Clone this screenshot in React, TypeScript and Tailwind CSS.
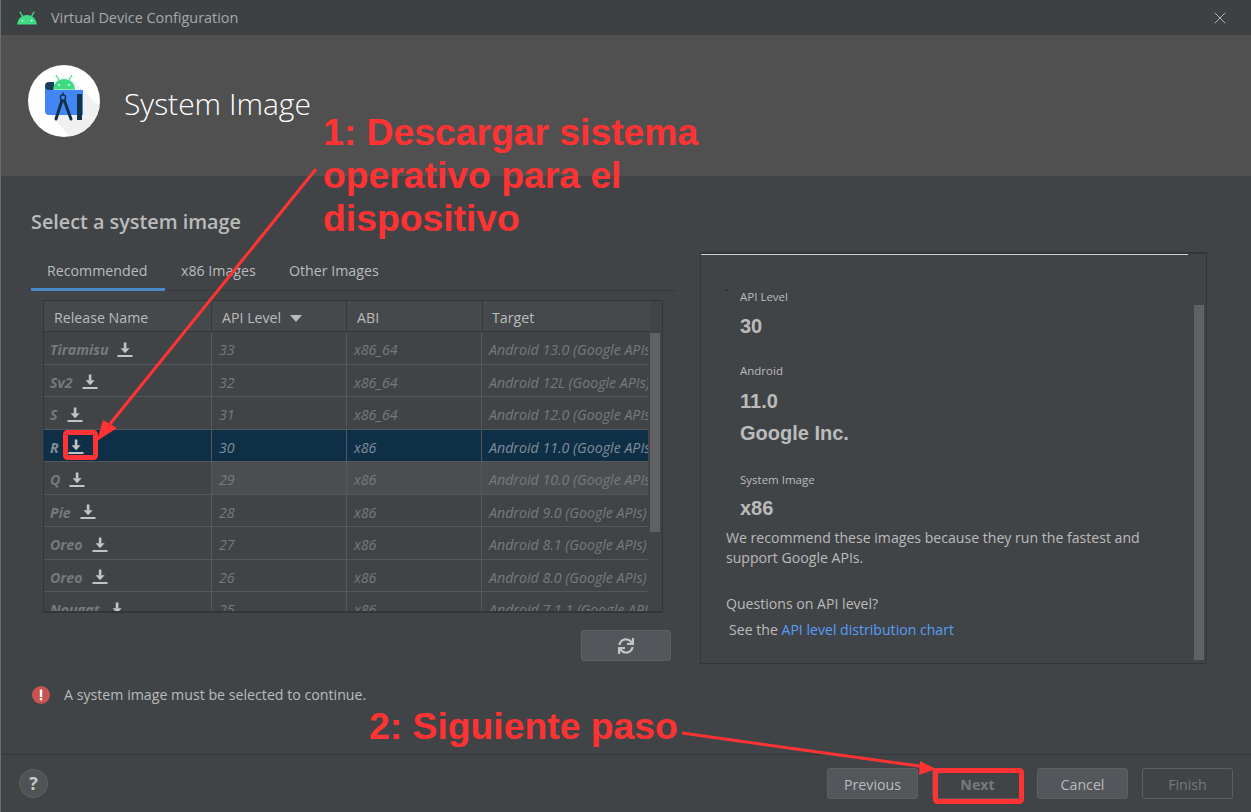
import React from 'react'
import { X } from 'lucide-react'
import { FaSync } from 'react-icons/fa'

const uiFont = { fontFamily: '"Open Sans", "Noto Sans", sans-serif' }
const arial = { fontFamily: '"Liberation Sans", sans-serif' }

type Row = { name: string; api: string; abi: string; target: string; selected?: boolean; hover?: boolean }

const rows: Row[] = [
  { name: 'Tiramisu', api: '33', abi: 'x86_64', target: 'Android 13.0 (Google APIs)' },
  { name: 'Sv2', api: '32', abi: 'x86_64', target: 'Android 12L (Google APIs)' },
  { name: 'S', api: '31', abi: 'x86_64', target: 'Android 12.0 (Google APIs)' },
  { name: 'R', api: '30', abi: 'x86', target: 'Android 11.0 (Google APIs)', selected: true },
  { name: 'Q', api: '29', abi: 'x86', target: 'Android 10.0 (Google APIs)', hover: true },
  { name: 'Pie', api: '28', abi: 'x86', target: 'Android 9.0 (Google APIs)' },
  { name: 'Oreo', api: '27', abi: 'x86', target: 'Android 8.1 (Google APIs)' },
  { name: 'Oreo', api: '26', abi: 'x86', target: 'Android 8.0 (Google APIs)' },
  { name: 'Nougat', api: '25', abi: 'x86', target: 'Android 7.1.1 (Google APIs)' },
]

const DownloadIcon = () => (
  <svg width="16" height="16" viewBox="0 0 16 16" className="shrink-0 text-[#c4c4c4]" fill="currentColor">
    <rect x="6.800" y="0.500" width="2.600" height="6" />
    <path d="M3.600 6.200h9L8.100 11.200z" />
    <rect x="0.500" y="13" width="15" height="2" />
  </svg>
)

const AndroidHead = ({ className }: { className?: string }) => (
  <svg viewBox="0 0 24 14" className={className}>
    <path d="M5 1.200 7.600 5.400M19 1.200 16.400 5.400" stroke="#3ddc84" strokeWidth="1.300" strokeLinecap="round" />
    <path d="M2.200 13.500C2.700 7.800 6.700 4 12 4s9.300 3.800 9.800 9.500z" fill="#3ddc84" />
    <circle cx="7.400" cy="9.600" r="0.900" fill="#fff" />
    <circle cx="16.600" cy="9.600" r="0.900" fill="#fff" />
  </svg>
)

const StudioLogo = () => (
  <div className="w-[72px] h-[72px] rounded-full bg-white overflow-hidden shrink-0">
    <svg viewBox="0 0 72 72" className="w-[72px] h-[72px]">
      <path d="M42 13 72 42V72H42L24 51z" fill="#f0f0f0" />
      <path d="M21 17c-2.500 0-4 1.500-4 4v25h9V17z" fill="#1c3d5a" />
      <path d="M17 21c0 2.600 1.800 4 4.500 4H55v25H21c-2.500 0-4-1.500-4-4z" fill="#4285f4" />
      <path d="M25 24.500c.5-6.500 5-10.500 11-10.500s10.500 4 11 10.500z" fill="#3ddc84" />
      <path d="M28 10l3 5M44 10l-3 5" stroke="#3ddc84" strokeWidth="1.200" />
      <circle cx="31" cy="20" r="0.900" fill="#fff" />
      <circle cx="41" cy="20" r="0.900" fill="#fff" />
      <rect x="49" y="29" width="5" height="26" rx="0.600" fill="#123047" />
      <path d="M35 32 28 54" stroke="#123047" strokeWidth="3" strokeLinecap="round" />
      <path d="M35 32 43 54" stroke="#123047" strokeWidth="3" strokeLinecap="round" />
      <circle cx="35" cy="32.500" r="2.600" fill="#4285f4" stroke="#123047" strokeWidth="1.400" />
      <rect x="34.300" y="27.500" width="1.400" height="3" fill="#123047" />
    </svg>
  </div>
)

const TableRow = ({ row }: { row: Row }) => {
  const bg = row.selected ? 'bg-[#0f2f47]' : row.hover ? 'bg-[#4b4e50]' : ''
  return (
    <div className={`flex h-[32.500px] shrink-0 italic text-[14.200px] ${row.selected ? 'text-[#7f8d99]' : 'text-[#77797b]'}`}>
      <div className={`w-[168px] shrink-0 flex items-center gap-[9px] pl-[6px] pt-[4px] border-r border-b border-[#55585a] ${row.selected ? 'bg-[#0f2f47]' : ''}`}>
        <span className="font-bold">{row.name}</span>
        <DownloadIcon />
      </div>
      <div className={`w-[135px] shrink-0 flex items-center pl-[7px] pt-[4px] border-r border-b border-[#55585a] ${bg}`}>{row.api}</div>
      <div className={`w-[135px] shrink-0 flex items-center pl-[7px] pt-[4px] border-r border-b border-[#55585a] ${bg}`}>{row.abi}</div>
      <div className={`w-[166px] shrink-0 flex items-center pl-[7px] pt-[4px] border-b border-[#55585a] overflow-hidden whitespace-nowrap ${bg}`}>{row.target}</div>
    </div>
  )
}

const HeaderCell = ({ className, children }: { className: string; children: React.ReactNode }) => (
  <div className={`flex items-center gap-[9px] pt-[4px] border-r border-b border-[#36393b] bg-[#46494b] ${className}`}>{children}</div>
)

const SystemTable = () => (
  <div className="relative ml-[12px] mt-[9px] w-[620px] h-[313px] border border-[#333537] border-b-2 overflow-hidden">
    <div className="flex h-[31px] text-[14.200px] text-[#bbbbbb]">
      <HeaderCell className="w-[168px] pl-[10px]">Release Name</HeaderCell>
      <HeaderCell className="w-[135px] pl-[10px]">
        API Level
        <svg width="12" height="7" viewBox="0 0 12 7"><path d="M0 0h12L6 7z" fill="#bbbbbb" /></svg>
      </HeaderCell>
      <HeaderCell className="w-[136px] pl-[10px]">ABI</HeaderCell>
      <div className="w-[167px] flex items-center pl-[9px] pt-[4px] bg-[#46494b] border-b border-[#36393b]">Target</div>
    </div>
    {rows.map(r => (
      <TableRow key={r.api} row={r} />
    ))}
    <div className="absolute right-[2px] top-[32px] w-[10px] h-[199px] bg-[#5f6163]" />
  </div>
)

const Label = ({ className, children }: { className?: string; children: React.ReactNode }) => (
  <div className={`text-[11.500px] leading-[16px] text-[#bbbbbb] ${className ?? ''}`}>{children}</div>
)

const Value = ({ className, children }: { className?: string; children: React.ReactNode }) => (
  <div className={`text-[20px] leading-[24px] font-bold text-[#bbbbbb] ${className ?? ''}`} style={arial}>{children}</div>
)

const DetailsPanel = () => (
  <div className="relative w-[507px] h-[412px] border border-[#333537] border-t-2 pl-[25px] pt-[35px] text-[14.100px] text-[#bbbbbb]">
    <div className="absolute left-0 top-0 w-[487px] h-[1px] bg-[#d0d0d0]" />
    <div className="absolute left-[25px] top-[36px] w-[1px] h-[1px] bg-black" />
    <div className="absolute right-[2px] top-[51px] w-[10px] h-[355px] bg-[#5f6163]" />
    <div className="pl-[14px]">
      <Label>API Level</Label>
      <Value className="mt-[9px]">30</Value>
      <Label className="mt-[25px]">Android</Label>
      <Value className="mt-[10px]">11.0</Value>
      <Value className="mt-[8px]">Google Inc.</Value>
      <Label className="mt-[27px]">System Image</Label>
      <Value className="mt-[8px]">x86</Value>
    </div>
    <p className="mt-[8px] w-[440px] leading-[20px]">We recommend these images because they run the fastest and support Google APIs.</p>
    <p className="mt-[26px] leading-[20px]">Questions on API level?</p>
    <p className="mt-[6px] ml-[3px] leading-[20px]">
      See the <span className="text-[#589df6]">API level distribution chart</span>
    </p>
  </div>
)

const FooterButton = ({ className, children }: { className?: string; children: React.ReactNode }) => (
  <div className={`w-[91px] h-[31px] rounded-[3px] border flex items-center justify-center pt-[2px] text-[14.200px] ${className ?? ''}`}>{children}</div>
)

const Annotations = () => (
  <div className="absolute inset-0 pointer-events-none">
    <div className="absolute left-[322px] top-[111px] text-[37.300px] leading-[43px] font-bold text-[#ff3333] whitespace-nowrap" style={arial}>
      1: Descargar sistema
      <br />
      operativo para el
      <br />
      dispositivo
    </div>
    <div className="absolute left-[368px] top-[705px] text-[37.300px] leading-[43px] font-bold text-[#ff3333] whitespace-nowrap" style={arial}>
      2: Siguiente paso
    </div>
    <svg width="1251" height="812" className="absolute left-0 top-0">
      <path d="M315 169 109 424" stroke="#ff3333" strokeWidth="3" />
      <path d="M96 441 102 420 116 428z" fill="#ff3333" />
      <path d="M681 733 925 767" stroke="#ff3333" strokeWidth="3" />
      <path d="M935 769 919 761 918 775z" fill="#ff3333" />
      <rect x="64.500" y="432.500" width="30" height="25" rx="2" fill="none" stroke="#ff3333" strokeWidth="5" />
      <rect x="934.500" y="770.500" width="86" height="31" rx="2" fill="none" stroke="#ff3333" strokeWidth="5" />
    </svg>
  </div>
)

export default function App() {
  return (
    <div className="relative w-[1251px] h-[812px] flex flex-col bg-[#414447] border-l border-[#6b6d6f] overflow-hidden" style={uiFont}>
      <div className="h-[35px] shrink-0 flex items-center pl-[14px] pr-[21px] bg-[#3e4144] text-[14.400px] text-[#a8a8a8]">
        <AndroidHead className="w-[24px] h-[14px]" />
        <span className="ml-[12px]">Virtual Device Configuration</span>
        <X className="ml-auto w-[20px] h-[20px] text-[#b5b5b5]" strokeWidth={1.200} />
      </div>

      <div className="h-[141px] shrink-0 flex items-center pl-[27px] pb-[9px] bg-[#505050]">
        <StudioLogo />
        <span className="ml-[24px] mt-[5px] text-[30px] font-light text-white">System Image</span>
      </div>

      <div className="flex-1 flex">
        <div className="w-[699px] shrink-0 pl-[30px]">
          <h2 className="mt-[33px] text-[19.800px] leading-[26px] font-semibold text-[#bbbbbb]">Select a system image</h2>
          <div className="mt-[20px] w-[645px] h-[36px] flex border-b border-[#36393b] text-[14.200px] text-[#bbbbbb]">
            <div className="w-[134px] h-[36px] border-b-[3px] border-[#4a88c7] flex items-center pl-[16px] pb-[1px]">Recommended</div>
            <div className="w-[124px] flex items-center pl-[16px] pb-[4px]">x86 Images</div>
            <div className="flex items-center pb-[4px]">Other Images</div>
          </div>
          <SystemTable />
          <div className="mt-[17px] ml-[550px] w-[90px] h-[31px] rounded-[3px] border border-[#5e6060] bg-[#53565a] flex items-center justify-center text-[#c4c4c4]">
            <FaSync className="w-[16px] h-[16px]" />
          </div>
          <div className="mt-[23px] ml-[1px] flex items-center text-[14.200px] text-[#bbbbbb]">
            <svg width="18" height="18" viewBox="0 0 18 18" className="shrink-0">
              <circle cx="9" cy="9" r="9" fill="#c75450" />
              <rect x="7.800" y="3.500" width="2.400" height="7.500" fill="#fff" />
              <rect x="7.800" y="12" width="2.400" height="2.400" fill="#fff" />
            </svg>
            <span className="ml-[14px]">A system image must be selected to continue.</span>
          </div>
        </div>
        <div className="pt-[76px]">
          <DetailsPanel />
        </div>
      </div>

      <div className="h-[58px] shrink-0 flex items-center border-t border-[#36393b] pl-[18px] pr-[18px]">
        <div className="w-[29px] h-[29px] rounded-full bg-[#505355] border border-[#606264] flex items-center justify-center text-[18px] font-bold text-[#c8c8c8]">?</div>
        <div className="ml-auto flex gap-[14px]">
          <FooterButton className="bg-[#53565a] border-[#5e6060] text-[#bbbbbb]">Previous</FooterButton>
          <FooterButton className="bg-[#414447] border-[#55585a] font-bold text-[#77797b]">Next</FooterButton>
          <FooterButton className="bg-[#53565a] border-[#5e6060] text-[#bbbbbb]">Cancel</FooterButton>
          <FooterButton className="bg-[#414447] border-[#5e6060] text-[#77797b]">Finish</FooterButton>
        </div>
      </div>

      <Annotations />
    </div>
  )
}
